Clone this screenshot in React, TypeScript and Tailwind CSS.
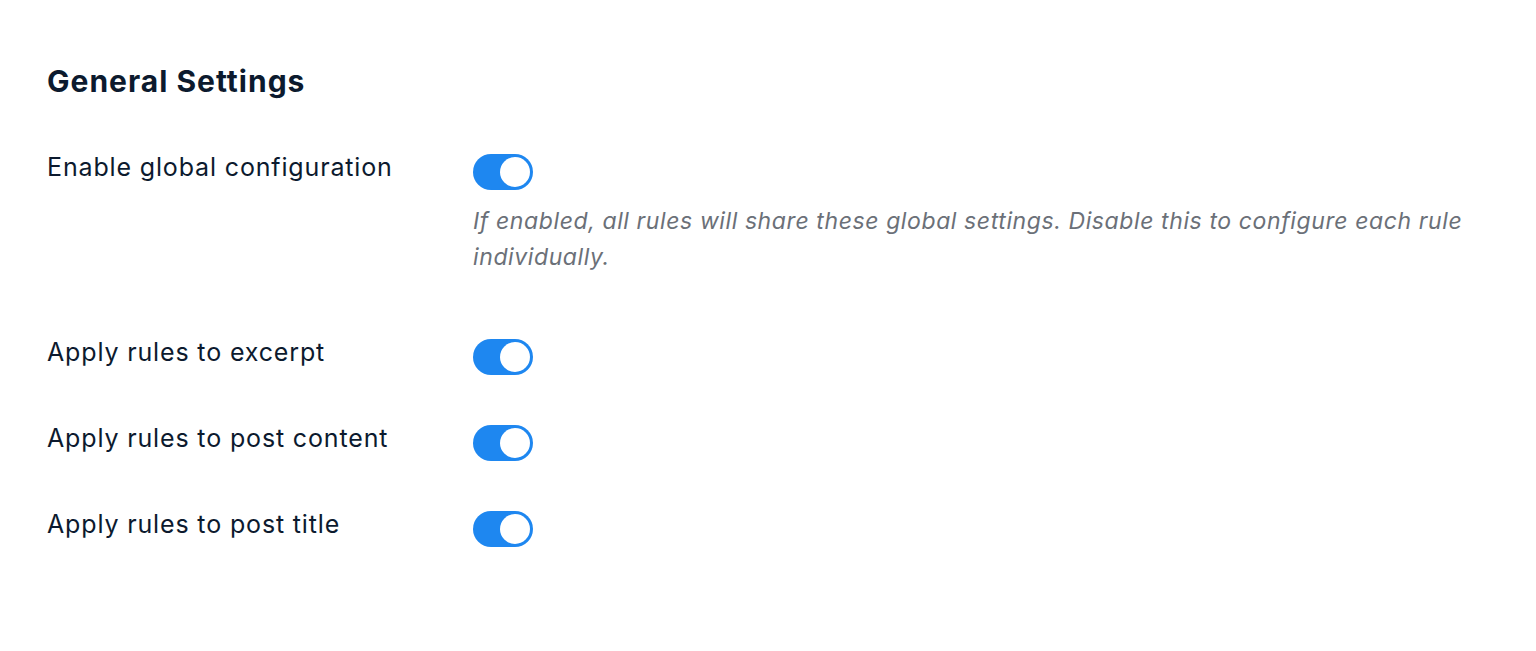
import React, { useState } from "react";

type Setting = {
  id: string;
  label: string;
  description?: string;
};

const settings: Setting[] = [
  {
    id: "global",
    label: "Enable global configuration",
    description:
      "If enabled, all rules will share these global settings. Disable this to configure each rule individually.",
  },
  { id: "excerpt", label: "Apply rules to excerpt" },
  { id: "content", label: "Apply rules to post content" },
  { id: "title", label: "Apply rules to post title" },
];

function Toggle({ on, onChange }: { on: boolean; onChange: () => void }) {
  return (
    <button
      type="button"
      role="switch"
      aria-checked={on}
      onClick={onChange}
      className={`flex h-[36px] w-[60px] shrink-0 items-center rounded-full px-[3px] transition-colors ${
        on ? "bg-[#1e87f0] justify-end" : "bg-gray-300 justify-start"
      }`}
    >
      <span className="h-[30px] w-[30px] rounded-full bg-white" />
    </button>
  );
}

export default function App() {
  const [values, setValues] = useState<Record<string, boolean>>({
    global: true,
    excerpt: true,
    content: true,
    title: true,
  });

  return (
    <div
      className="min-h-screen bg-white px-[47px] pt-[63px] text-[#0c1a2e]"
      style={{ fontFamily: "Inter, 'Noto Sans', sans-serif" }}
    >
      <h2 className="text-[30px] font-bold leading-[36px] tracking-[1px]">
        General Settings
      </h2>

      <div className="mt-[50px] flex flex-col gap-[45px]">
        {settings.map((s) => (
          <div key={s.id} className="flex items-start">
            <div className="w-[426px] shrink-0 text-[25px] leading-[36px] tracking-[0.85px]">
              {s.label}
            </div>
            <div className={`flex flex-1 flex-col ${s.description ? "pb-[14px]" : ""}`}>
              <div className="mt-[5px]">
                <Toggle
                  on={values[s.id]}
                  onChange={() =>
                    setValues((v) => ({ ...v, [s.id]: !v[s.id] }))
                  }
                />
              </div>
              {s.description && (
                <p className="mt-[13px] text-[23px] italic leading-[36px] tracking-[0.6px] text-[#6b7078]">
                  {s.description}
                </p>
              )}
            </div>
          </div>
        ))}
      </div>
    </div>
  );
}
